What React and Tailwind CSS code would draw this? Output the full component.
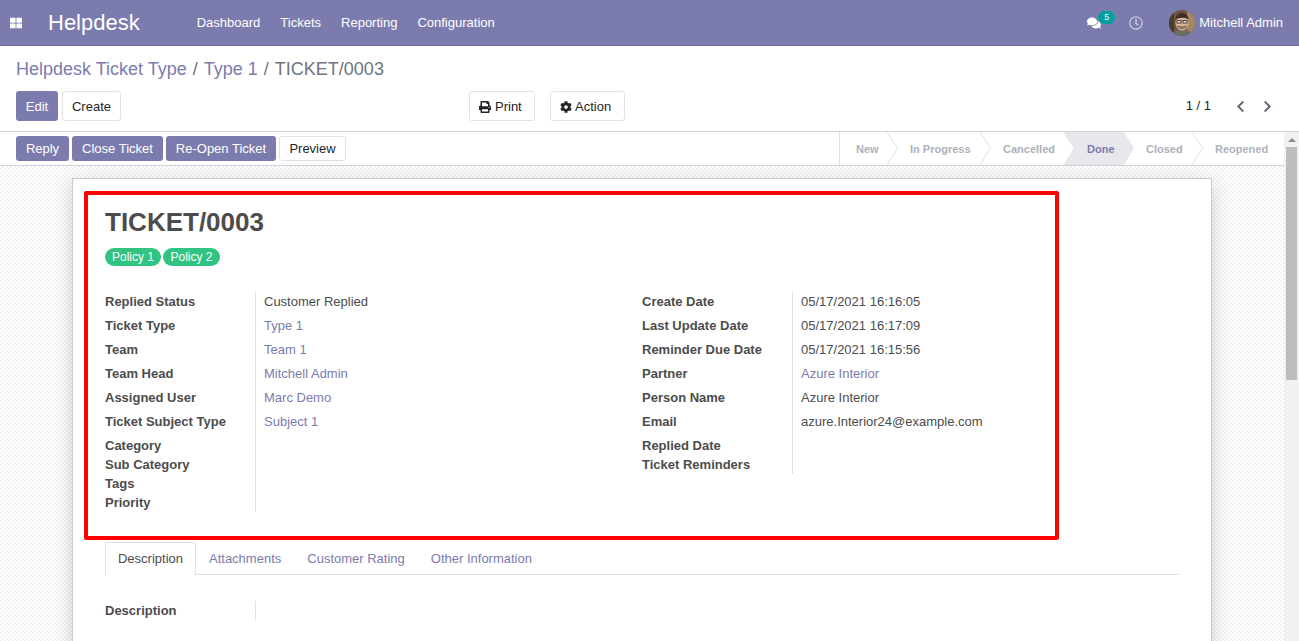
import { FaThLarge, FaComments, FaRegClock, FaPrint, FaCog, FaChevronLeft, FaChevronRight } from 'react-icons/fa'

const leftRows = [
  ['Replied Status', 'Customer Replied', false, 24],
  ['Ticket Type', 'Type 1', true, 24],
  ['Team', 'Team 1', true, 24],
  ['Team Head', 'Mitchell Admin', true, 24],
  ['Assigned User', 'Marc Demo', true, 24],
  ['Ticket Subject Type', 'Subject 1', true, 24],
  ['Category', '', false, 19],
  ['Sub Category', '', false, 19],
  ['Tags', '', false, 19],
  ['Priority', '', false, 19],
]

const rightRows = [
  ['Create Date', '05/17/2021 16:16:05', false, 24],
  ['Last Update Date', '05/17/2021 16:17:09', false, 24],
  ['Reminder Due Date', '05/17/2021 16:15:56', false, 24],
  ['Partner', 'Azure Interior', true, 24],
  ['Person Name', 'Azure Interior', false, 24],
  ['Email', 'azure.Interior24@example.com', false, 24],
  ['Replied Date', '', false, 19],
  ['Ticket Reminders', '', false, 19],
]

const stages = [
  { name: 'New', cls: 'w-[47px] pl-[16px]' },
  { name: 'In Progress', cls: 'w-[93px] pl-[23px]' },
  { name: 'Cancelled', cls: 'w-[84px] pl-[23px]' },
  { name: 'Done', cls: 'w-[60px] pl-[23px]', active: true },
  { name: 'Closed', cls: 'w-[68px] pl-[22px]' },
  { name: 'Reopened', cls: 'w-[92px] pl-[23px]', last: true },
]

function Avatar() {
  return (
    <svg width="26" height="26" viewBox="0 0 26 26" className="rounded-full">
      <rect width="26" height="26" fill="#6f5540" />
      <rect x="18" y="0" width="8" height="26" fill="#a58863" />
      <rect x="0" y="0" width="5" height="26" fill="#4a3a30" />
      <path d="M3 26c1-5 5-7 10-7s9 2 10 7z" fill="#6a6c62" />
      <ellipse cx="13" cy="12.5" rx="6.5" ry="8" fill="#d9b595" />
      <path d="M6.5 10c0-5 3-7 6.5-7s6.5 2 6.5 7c-2-3-10-3-13 0z" fill="#3f3026" />
      <path d="M7.5 15c1 5.5 10 5.5 11 0-2 1.5-9 1.5-11 0z" fill="#8a7260" />
      <rect x="8" y="10.5" width="4" height="2.5" fill="#eee0d0" stroke="#2b2320" strokeWidth="0.8" />
      <rect x="14" y="10.5" width="4" height="2.5" fill="#eee0d0" stroke="#2b2320" strokeWidth="0.8" />
    </svg>
  )
}

function Field({ label, value, link, height }) {
  const h = height === 24 ? 'h-6' : 'h-[19px]'
  return (
    <div className={`flex ${h}`}>
      <div className="w-[150px] font-bold text-[#4c4c4c] leading-[19px]">{label}</div>
      <div className={`flex-1 border-l border-[#dee2e6] pl-2 leading-[19px] ${link ? 'text-[#7c7bad]' : 'text-[#4c4c4c]'}`}>{value}</div>
    </div>
  )
}

function Stage({ stage }) {
  return (
    <div className={`relative h-full flex items-center pt-px text-[11px] font-bold ${stage.cls} ${stage.active ? 'text-[#7c7bad]' : 'text-[#adb1bb]'}`}>
      {stage.active && (
        <svg className="absolute left-0 top-0" width="71" height="33" viewBox="0 0 71 33">
          <path d="M0 0H60L70 16.5L60 33H0L10.5 16.5Z" fill="#e6e8ec" />
        </svg>
      )}
      {!stage.last && !stage.active && (
        <svg className="absolute right-[-11px] top-0 z-10" width="11" height="33" viewBox="0 0 11 33">
          <path d="M0 0L10.5 16.5L0 33" fill="none" stroke="#dee2e6" />
        </svg>
      )}
      <span className="relative z-20">{stage.name}</span>
    </div>
  )
}

export default function App() {
  return (
    <div className="h-screen overflow-hidden flex flex-col bg-white text-[13px] text-[#212529] font-['Liberation_Sans',Arial,sans-serif]">
      <nav className="h-[46px] shrink-0 flex items-center bg-[#7c7bad] border-b border-[#6b6a99] text-white">
        <FaThLarge className="ml-[10px] text-[12px]" />
        <span className="ml-[26px] text-[22px] leading-none">Helpdesk</span>
        <div className="ml-[57px] flex gap-[20px]">
          <span>Dashboard</span>
          <span>Tickets</span>
          <span>Reporting</span>
          <span>Configuration</span>
        </div>
        <div className="ml-auto flex items-center pr-[16px]">
          <div className="relative">
            <FaComments className="text-[14px]" />
            <span className="absolute left-[11px] top-[-5px] h-[13px] w-[17px] rounded-full bg-[#00a09d] text-[9px] leading-[13px] text-center">5</span>
          </div>
          <FaRegClock className="ml-[28px] text-[14px] text-[#c9c8de]" />
          <div className="ml-[26px]"><Avatar /></div>
          <span className="ml-1">Mitchell Admin</span>
        </div>
      </nav>

      <div className="h-[86px] shrink-0 border-b border-[#ced4da] px-4 pt-[11px]">
        <div className="text-[18px] leading-[24px] text-[#6c757d]">
          <span className="text-[#7c7bad]">Helpdesk Ticket Type</span>
          <span className="mx-[6px]">/</span>
          <span className="text-[#7c7bad]">Type 1</span>
          <span className="mx-[6px]">/</span>
          <span>TICKET/0003</span>
        </div>
        <div className="mt-[10px] flex items-center">
          <div className="w-[453px] flex gap-1">
            <button className="h-[30px] w-[42px] pt-px rounded-[3px] bg-[#7c7bad] text-white">Edit</button>
            <button className="h-[30px] w-[59px] pt-px rounded-[3px] border border-[#dee2e6] bg-white">Create</button>
          </div>
          <button className="h-[30px] w-[66px] pt-px pl-[9px] rounded-[3px] border border-[#dee2e6] flex items-center gap-1">
            <FaPrint className="text-[12px]" />Print
          </button>
          <button className="ml-[15px] h-[30px] w-[75px] pt-px pl-[9px] rounded-[3px] border border-[#dee2e6] flex items-center gap-[3px]">
            <FaCog className="text-[12px]" />Action
          </button>
          <span className="ml-auto">1 / 1</span>
          <FaChevronLeft className="ml-[23px] text-[13px] text-[#5f6a75]" />
          <FaChevronRight className="ml-[14px] mr-[9px] text-[13px] text-[#5f6a75]" />
        </div>
      </div>

      <div className="flex-1 min-h-0 flex">
        <div className="flex-1 min-w-0 flex flex-col">
          <div className="h-[34px] shrink-0 flex items-center border-b border-[#ced4da] pl-4">
            <div className="flex gap-[3px]">
              <button className="h-[25px] w-[53px] pt-px rounded-[3px] bg-[#7c7bad] text-white">Reply</button>
              <button className="h-[25px] w-[91px] pt-px rounded-[3px] bg-[#7c7bad] text-white">Close Ticket</button>
              <button className="h-[25px] w-[110px] pt-px rounded-[3px] bg-[#7c7bad] text-white">Re-Open Ticket</button>
              <button className="h-[25px] w-[67px] pt-px rounded-[3px] border border-[#dee2e6] bg-white">Preview</button>
            </div>
            <div className="ml-auto h-full flex border-l border-[#dee2e6]">
              {stages.map((s) => <Stage key={s.name} stage={s} />)}
            </div>
          </div>

          <div className="flex-1 min-h-0 px-[72px] pt-[12px] bg-[repeating-conic-gradient(#f3f3f3_0_25%,#ffffff_0_50%)] bg-[length:4px_4px]">
            <div className="relative w-[1140px] h-[600px] bg-white border border-[#c9ccd6] shadow-[0_5px_20px_-1px_rgba(0,0,0,0.2)] px-[32px] pt-[26px]">
              <div className="absolute left-[11px] top-[12px] w-[975px] h-[349px] border-[4px] border-[#ff0000] rounded-[2px]" />
              <h1 className="text-[26px] leading-[34px] font-bold text-[#4c4c4c]">TICKET/0003</h1>
              <div className="mt-[9px] flex gap-[2px]">
                <span className="h-[18px] w-[56px] rounded-full bg-[#30c381] text-white text-[12px] leading-[18px] text-center">Policy 1</span>
                <span className="h-[18px] w-[57px] rounded-full bg-[#30c381] text-white text-[12px] leading-[18px] text-center">Policy 2</span>
              </div>
              <div className="mt-[26px] flex">
                <div className="w-[537px]">
                  {leftRows.map((r) => <Field key={r[0]} label={r[0]} value={r[1]} link={r[2]} height={r[3]} />)}
                </div>
                <div className="w-[400px]">
                  {rightRows.map((r) => <Field key={r[0]} label={r[0]} value={r[1]} link={r[2]} height={r[3]} />)}
                </div>
              </div>
              <div className="mt-[30px] flex h-[33px] border-b border-[#dee2e6] w-[1074px] text-[#7c7bad]">
                <div className="h-[33px] w-[91px] flex items-center justify-center rounded-t-[3px] border border-b-0 border-[#dee2e6] bg-white text-[#4c4c4c]">Description</div>
                <div className="h-[33px] flex items-center ml-[13px]">Attachments</div>
                <div className="h-[33px] flex items-center ml-[26px]">Customer Rating</div>
                <div className="h-[33px] flex items-center ml-[26px]">Other Information</div>
              </div>
              <div className="mt-[26px] flex h-[19px]">
                <div className="w-[150px] font-bold text-[#4c4c4c] leading-[19px]">Description</div>
                <div className="border-l border-[#dee2e6]" />
              </div>
            </div>
          </div>
        </div>

        <div className="w-[15px] shrink-0 bg-[#f1f1f1] flex flex-col">
          <div className="h-[15px] flex items-center justify-center">
            <div className="w-0 h-0 border-x-[4px] border-x-transparent border-b-[4px] border-b-[#8a8a8a]" />
          </div>
          <div className="h-[233px] mx-[2px] bg-[#bdbdbd]" />
        </div>
      </div>
    </div>
  )
}
